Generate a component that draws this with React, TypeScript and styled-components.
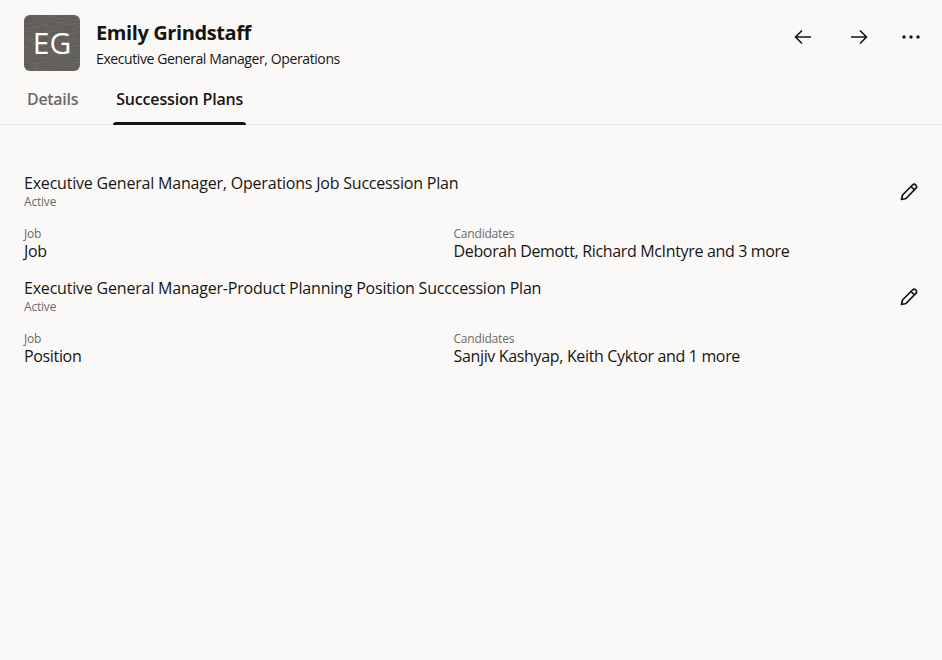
import styled, {createGlobalStyle} from "styled-components";

const GlobalStyle = createGlobalStyle`
    html, body {
        margin: 0;
        padding: 0;
        height: 100%;
        background-color: #fbf9f8;
        font-family: "Open Sans", "Noto Sans", sans-serif;
        color: #161513;
    }
`;

const Page = styled.div`
    width: 942px;
    height: 660px;
    overflow: hidden;
`;

const Header = styled.header`
    display: flex;
    justify-content: space-between;
    height: 56px;
    padding: 15px 19px 0 24px;
`;

const Person = styled.div`
    display: flex;
    gap: 16px;
`;

const Avatar = styled.div`
    position: relative;
    overflow: hidden;
    width: 56px;
    height: 56px;
    border-radius: 6px;
    background-color: #5e5a55;
    color: #fff;
    display: flex;
    align-items: center;
    justify-content: center;
    font-size: 30px;
    line-height: 1;
`;

const AvatarGrain = styled.svg`
    position: absolute;
    inset: 0;
`;

const Initials = styled.span`
    position: relative;
`;

const Name = styled.h1`
    margin: 5px 0 0;
    font-size: 20px;
    line-height: 26px;
    font-weight: 700;
    letter-spacing: -0.4px;
`;

const Role = styled.div`
    margin-top: 3px;
    font-size: 14px;
    line-height: 20px;
    letter-spacing: -0.4px;
`;

const Actions = styled.div`
    display: flex;
    gap: 24px;
    padding-top: 2px;
`;

const IconButton = styled.button`
    width: 32px;
    height: 40px;
    padding: 0;
    border: 0;
    background: none;
    color: #161513;
    display: flex;
    align-items: center;
    justify-content: center;
`;

const MoreButton = styled(IconButton)`
    width: 24px;
`;

const Tabs = styled.nav`
    display: flex;
    gap: 32px;
    height: 53px;
    padding-left: 24px;
    border-bottom: 1px solid #eceae8;
`;

const Tab = styled.div<{ $active?: boolean }>`
    position: relative;
    padding: 18px 3px 0;
    font-size: 16px;
    line-height: 20px;
    font-weight: 600;
    letter-spacing: ${(p) => (p.$active ? "-0.17px" : "-0.3px")};
    color: ${(p) => (p.$active ? "#161513" : "#6b6967")};

    ${(p) =>
        p.$active &&
        `&::after {
            content: "";
            position: absolute;
            left: 0;
            right: 0;
            bottom: -1px;
            height: 3px;
            background-color: #161513;
            border-radius: 3px 3px 0 0;
        }`}
`;

const PlanList = styled.main`
    display: flex;
    flex-direction: column;
    gap: 17px;
    padding: 48px 21px 0 24px;
`;

const Plan = styled.section`
    display: flex;
    flex-direction: column;
`;

const PlanTop = styled.div`
    display: flex;
    justify-content: space-between;
    height: 52px;
`;

const PlanTitle = styled.div`
    font-size: 16px;
    line-height: 20px;
    letter-spacing: -0.2px;
`;

const Small = styled.div`
    box-sizing: border-box;
    height: 16px;
    padding-top: 1px;
    font-size: 12px;
    line-height: 16px;
    color: #6b6967;
    letter-spacing: -0.2px;
`;

const EditButton = styled(IconButton)`
    width: 24px;
    height: 38px;
`;

const Fields = styled.div`
    display: grid;
    grid-template-columns: 429.5px 1fr;
`;

const Value = styled.div`
    font-size: 16px;
    line-height: 20px;
    letter-spacing: -0.34px;
`;

const ArrowLeft = () => (
    <svg width="20" height="20" viewBox="0 0 20 20" fill="none" stroke="currentColor" strokeWidth="1.6">
        <path d="M18 10H2.5M9 3.5L2.5 10L9 16.5"/>
    </svg>
);

const ArrowRight = () => (
    <svg width="20" height="20" viewBox="0 0 20 20" fill="none" stroke="currentColor" strokeWidth="1.6">
        <path d="M2 10H17.5M11 3.5L17.5 10L11 16.5"/>
    </svg>
);

const Dots = () => (
    <svg width="20" height="20" viewBox="0 0 20 20" fill="currentColor">
        <circle cx="3" cy="10" r="1.7"/>
        <circle cx="10" cy="10" r="1.7"/>
        <circle cx="17" cy="10" r="1.7"/>
    </svg>
);

const Pencil = () => (
    <svg width="18" height="18" viewBox="0 0 18 18" fill="none" stroke="currentColor" strokeWidth="1.7" strokeLinejoin="round">
        <path d="M1.5 16.5L2.5 12L12.5 2C13.5 1 14.8 1 15.8 2C16.8 3 16.8 4.3 15.8 5.3L6 15.5Z"/>
        <path d="M11 3.5L14.5 7"/>
    </svg>
);

// streaky noise, the avatar in the reference has a wood-like grain
const Grain = () => (
    <AvatarGrain width="56" height="56" viewBox="0 0 56 56">
        <filter id="grain">
            <feTurbulence type="fractalNoise" baseFrequency="0.12 0.8" numOctaves="2" seed="4"/>
            <feColorMatrix values="0 0 0 0 0.2  0 0 0 0 0.19  0 0 0 0 0.17  1 0 0 0 -0.3"/>
        </filter>
        <rect width="56" height="56" filter="url(#grain)"/>
    </AvatarGrain>
);

const plans = [
    {
        title: "Executive General Manager, Operations Job Succession Plan",
        type: "Job",
        candidates: "Deborah Demott, Richard McIntyre and 3 more",
    },
    {
        title: "Executive General Manager-Product Planning Position Succcession Plan",
        type: "Position",
        candidates: "Sanjiv Kashyap, Keith Cyktor and 1 more",
    },
];

export default function App() {
    return (
        <Page>
            <GlobalStyle/>
            <Header>
                <Person>
                    <Avatar>
                        <Grain/>
                        <Initials>EG</Initials>
                    </Avatar>
                    <div>
                        <Name>Emily Grindstaff</Name>
                        <Role>Executive General Manager, Operations</Role>
                    </div>
                </Person>
                <Actions>
                    <IconButton><ArrowLeft/></IconButton>
                    <IconButton><ArrowRight/></IconButton>
                    <MoreButton><Dots/></MoreButton>
                </Actions>
            </Header>
            <Tabs>
                <Tab>Details</Tab>
                <Tab $active>Succession Plans</Tab>
            </Tabs>
            <PlanList>
                {plans.map((plan) => (
                    <Plan key={plan.title}>
                        <PlanTop>
                            <div>
                                <PlanTitle>{plan.title}</PlanTitle>
                                <Small>Active</Small>
                            </div>
                            <EditButton><Pencil/></EditButton>
                        </PlanTop>
                        <Fields>
                            <div>
                                <Small>Job</Small>
                                <Value>{plan.type}</Value>
                            </div>
                            <div>
                                <Small>Candidates</Small>
                                <Value>{plan.candidates}</Value>
                            </div>
                        </Fields>
                    </Plan>
                ))}
            </PlanList>
        </Page>
    );
}
